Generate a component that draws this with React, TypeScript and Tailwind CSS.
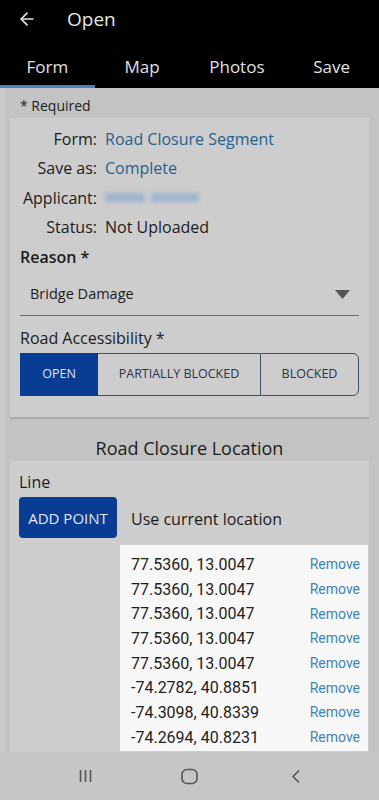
import { ArrowLeft } from 'lucide-react'

const INFO = [
  { label: 'Form:', value: 'Road Closure Segment', link: true },
  { label: 'Save as:', value: 'Complete', link: true },
  { label: 'Applicant:', value: '', blur: true },
  { label: 'Status:', value: 'Not Uploaded' },
]

const POINTS = [
  '77.5360, 13.0047',
  '77.5360, 13.0047',
  '77.5360, 13.0047',
  '77.5360, 13.0047',
  '77.5360, 13.0047',
  '-74.2782, 40.8851',
  '-74.3098, 40.8339',
  '-74.2694, 40.8231',
]

const TABS = ['Form', 'Map', 'Photos', 'Save']

export default function App() {
  return (
    <div className="w-[379px] h-[800px] flex flex-col overflow-hidden bg-[#c3c3c3] text-[#1c1c1c] font-['Open_Sans',sans-serif]">
      {/* Header */}
      <header className="bg-black shrink-0">
        <div className="h-[38px] flex items-center">
          <ArrowLeft size={20} strokeWidth={2} className="ml-[17px] text-[#e6e6e6]" />
          <span className="ml-[30px] text-[19px] text-[#e6e6e6]">Open</span>
        </div>
        <nav className="h-[50px] grid grid-cols-4">
          {TABS.map((t, i) => (
            <div key={t} className="relative flex items-center justify-center pt-[8px] text-[17px] text-[#e0e0e0]">
              {t}
              {i === 0 && <span className="absolute left-0 right-0 bottom-0 h-[3px] bg-[#4d7fb8]" />}
            </div>
          ))}
        </nav>
      </header>

      {/* Body */}
      <main className="flex-1 flex flex-col border-l-[5px] border-[#cacaca] pl-[5px] pr-[10px]">
        <p className="h-[30px] pl-[10px] pt-[8px] text-[14px] leading-[20px]">* Required</p>

        <section className="bg-[#cdcdcd] shadow-[0_2px_1px_rgba(0,0,0,0.12)] px-[10px] pt-[6px] pb-[21px]">
          {INFO.map(r => (
            <div key={r.label} className="flex items-center h-[29.5px] text-[16px]">
              <span className="w-[77px] text-right">{r.label}</span>
              {r.blur ? (
                <span className="ml-[8px] flex gap-[6px] blur-[2px]">
                  <span className="w-[40px] h-[9px] bg-[#9db4cc]" />
                  <span className="w-[48px] h-[9px] bg-[#9fb6ce]" />
                </span>
              ) : (
                <span className={`ml-[8px] ${r.link ? 'text-[#23638f]' : ''}`}>{r.value}</span>
              )}
            </div>
          ))}
          <div className="h-[29.5px] flex items-center text-[16px] font-semibold">Reason *</div>

          <div className="h-[42px] flex items-center justify-between border-b border-[#6a6a6a] pl-[10px] pr-[9px] mt-[2px]">
            <span className="text-[14.5px]">Bridge Damage</span>
            <svg width="15" height="9" viewBox="0 0 15 9"><path d="M0 0h15L7.5 9z" fill="#555" /></svg>
          </div>

          <div className="h-[37px] flex items-center pt-[7px] text-[16px]">Road Accessibility *</div>

          <div className="flex h-[43px] text-[12.5px] font-medium">
            <div className="w-[78px] flex items-center justify-center bg-[#093d94] text-[#dfe6f2] border border-[#093d94]">OPEN</div>
            <div className="w-[162px] flex items-center justify-center text-[#25344f] border-y border-[#3f4e6c]">PARTIALLY BLOCKED</div>
            <div className="flex-1 flex items-center justify-center text-[#25344f] border border-[#3f4e6c] rounded-r-[6px]">BLOCKED</div>
          </div>
        </section>

        <h2 className="h-[44px] flex items-center justify-center pt-[20px] text-[18px]">Road Closure Location</h2>

        <section className="flex-1 bg-[#cdcdcd] pl-[9px] pt-[9px]">
          <div className="h-[24px] flex items-center text-[16px]">Line</div>
          <div className="flex items-center mt-[3px]">
            <button className="w-[98px] h-[41px] pt-[2px] rounded-[4px] bg-[#093d94] text-[#e2e8f3] text-[15px]">ADD POINT</button>
            <span className="ml-[14px] pt-[4px] text-[16px]">Use current location</span>
          </div>
          <ul className="ml-[101px] mr-[1px] mt-[7px] bg-[#f7f7f7] pt-[8px] pb-[1px] pl-[11px] pr-[8px] font-['Roboto',sans-serif]">
            {POINTS.map((p, i) => (
              <li key={i} className="h-[24.7px] flex items-center justify-between">
                <span className="text-[16px] text-[#222]">{p}</span>
                <span className="text-[14px] text-[#3b86b8]">Remove</span>
              </li>
            ))}
          </ul>
        </section>
      </main>

      {/* System nav */}
      <footer className="h-[48px] shrink-0 bg-[#c6c6c6] flex items-center pl-[79px]">
        <svg width="13" height="14" viewBox="0 0 13 14">
          <path d="M1.5 1v12M6.5 1v12M11.5 1v12" stroke="#555" strokeWidth="1.6" />
        </svg>
        <svg width="17" height="17" viewBox="0 0 17 17" className="ml-[89px]">
          <rect x="1" y="1.5" width="15" height="14" rx="5" fill="none" stroke="#555" strokeWidth="1.6" />
        </svg>
        <svg width="10" height="15" viewBox="0 0 10 15" className="ml-[93px]">
          <path d="M8 1.5L2 7.5l6 6" fill="none" stroke="#555" strokeWidth="1.6" />
        </svg>
      </footer>
    </div>
  )
}
